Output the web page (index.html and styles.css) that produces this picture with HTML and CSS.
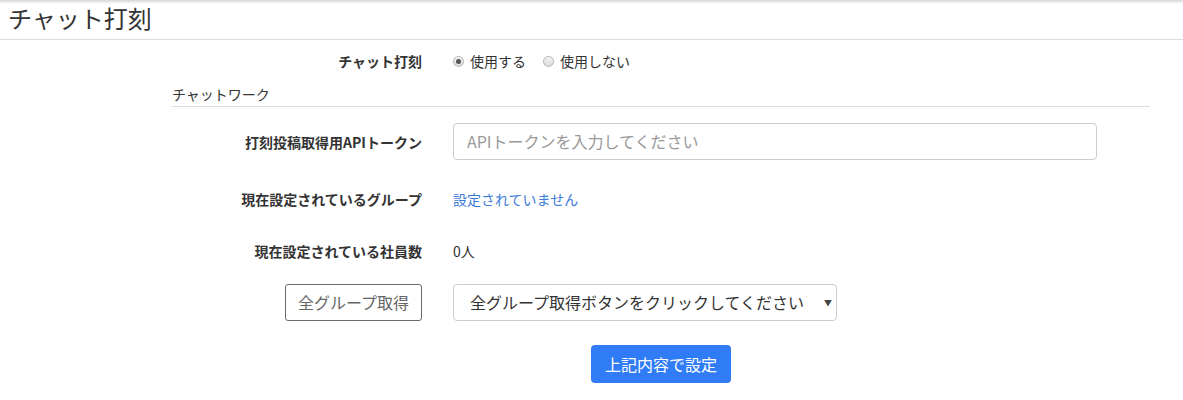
FILE: index.html
```html
<!DOCTYPE html>
<html lang="ja">
<head>
<meta charset="utf-8">
<link rel="stylesheet" href="styles.css">
</head>
<body>
<div class="topshade"></div>
<h1 class="page-title">チャット打刻</h1>
<form class="form">
  <div class="row row-radio">
    <div class="label">チャット打刻</div>
    <div class="control radios">
      <span class="radio"><span class="dot checked"></span>使用する</span>
      <span class="radio"><span class="dot"></span>使用しない</span>
    </div>
  </div>
  <div class="section">チャットワーク</div>
  <div class="row row-input">
    <div class="label">打刻投稿取得用APIトークン</div>
    <div class="control"><div class="input">APIトークンを入力してください</div></div>
  </div>
  <div class="row row-text">
    <div class="label">現在設定されているグループ</div>
    <div class="control"><a class="link">設定されていません</a></div>
  </div>
  <div class="row row-text row-count">
    <div class="label">現在設定されている社員数</div>
    <div class="control">0人</div>
  </div>
  <div class="row row-select">
    <div class="label"><span class="btn-outline">全グループ取得</span></div>
    <div class="control"><div class="select">全グループ取得ボタンをクリックしてください<span class="caret">▼</span></div></div>
  </div>
  <div class="submit-row"><span class="btn-primary">上記内容で設定</span></div>
</form>
</body>
</html>
```
FILE: styles.css
```css
html, body {
  margin: 0;
  padding: 0;
  background: #fff;
}
body {
  font-family: "Noto Sans CJK JP", "Noto Sans", sans-serif;
  color: #333;
  position: relative;
}
.topshade {
  position: absolute;
  left: 0;
  right: 0;
  top: 0;
  height: 4px;
  background: linear-gradient(#d8d8d8, rgba(255,255,255,0));
}
.page-title {
  margin: 0;
  height: 39px;
  padding-left: 8px;
  font-size: 24px;
  font-weight: normal;
  line-height: 36px;
  color: #333;
  border-bottom: 1px solid #ddd;
}
.form {
  margin-left: 172px;
  width: 978px;
}
.row {
  display: grid;
  grid-template-columns: 250px 1fr;
  column-gap: 31px;
  align-items: center;
}
.label {
  text-align: right;
  font-size: 14px;
  font-weight: bold;
  color: #333;
}
.control {
  font-size: 14px;
  color: #333;
}
.row-radio {
  height: 42px;
}
.radios {
  display: flex;
  gap: 17px;
}
.radio {
  display: inline-flex;
  align-items: center;
  gap: 6px;
}
.dot {
  width: 11px;
  height: 11px;
  box-sizing: border-box;
  border-radius: 50%;
  border: 1px solid #b5b5b5;
  background: linear-gradient(#f4f4f4, #dcdcdc);
  display: inline-flex;
  align-items: center;
  justify-content: center;
}
.dot.checked::after {
  content: "";
  width: 5px;
  height: 5px;
  border-radius: 50%;
  background: #555;
}
.section {
  font-size: 14px;
  line-height: 18px;
  padding-top: 3px;
  padding-bottom: 3px;
  border-bottom: 1px solid #ddd;
  color: #333;
}
.row-input {
  margin-top: 16px;
}
.input {
  width: 644px;
  height: 37px;
  box-sizing: border-box;
  border: 1px solid #ccc;
  border-radius: 4px;
  padding: 0 13px;
  font-size: 16px;
  line-height: 35px;
  color: #999;
}
.row-text {
  margin-top: 18px;
  height: 42px;
}
.row-count {
  margin-top: 10px;
}
.link {
  color: #3b7bd8;
}
.row-select {
  margin-top: 12px;
}
.btn-outline {
  display: inline-block;
  box-sizing: border-box;
  height: 37px;
  padding: 0 12px;
  border: 1px solid #6c6c6c;
  border-radius: 3px;
  font-size: 16px;
  font-weight: normal;
  line-height: 35px;
  color: #666;
}
.select {
  width: 384px;
  height: 37px;
  box-sizing: border-box;
  border: 1px solid #ccc;
  border-radius: 4px;
  padding: 0 0 0 16px;
  font-size: 16px;
  line-height: 35px;
  color: #333;
  display: flex;
  align-items: center;
}
.caret {
  margin-left: auto;
  margin-right: 4px;
  font-size: 8px;
  color: #444;
}
.submit-row {
  margin-top: 24px;
  display: flex;
  justify-content: center;
}
.btn-primary {
  display: inline-block;
  box-sizing: border-box;
  height: 38px;
  padding: 0 14px;
  background: #2f7cf6;
  border-radius: 4px;
  color: #fff;
  font-size: 16px;
  line-height: 38px;
}
```
